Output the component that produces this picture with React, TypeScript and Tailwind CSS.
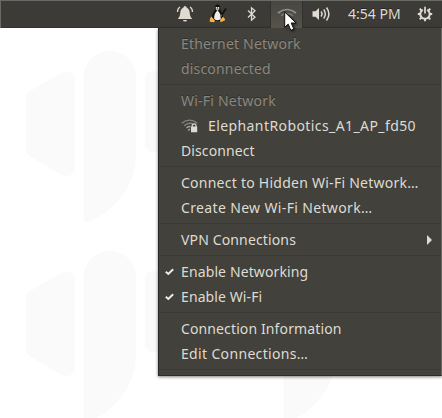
import type { ReactNode } from "react";

function Watermark() {
  return (
    <svg className="absolute inset-0" width="442" height="418" viewBox="0 0 442 418" aria-hidden="true">
      <defs>
        <g id="mark" fill="#fafafa">
          <path d="M26 98Q26 93 30 91L61 73Q67 69.500 71.500 73Q74.700 75.500 74.700 80V167.500Q74.700 172 71.500 174.500Q67 177.500 61 174.500L30 156.500Q26 154 26 149Z" />
          <path d="M83.500 75.500A26.300 26.300 0 0 1 136 75.500V154C136 184 116 210 89.500 221.500Q83.500 223.500 83.500 217Z" />
          <path d="M145 79A8 8 0 0 1 161 79V144A8 8 0 0 1 145 144Z" />
        </g>
      </defs>
      <use href="#mark" />
      <use href="#mark" y="200" />
      <use href="#mark" x="200" y="200" />
    </svg>
  );
}

function Bell() {
  return (
    <svg width="18" height="18" viewBox="0 0 18 18" fill="#dfdbd2">
      <circle cx="9" cy="2.600" r="1.500" />
      <path d="M9 2.500c3.100 0 4.500 2 4.700 5 .2 3 .8 4.500 2.500 6.500H1.800c1.700-2 2.300-3.500 2.500-6.500.2-3 1.600-5 4.700-5zM7 15h4a2 1.500 0 0 1-4 0z" />
      <path d="M4 2Q1.500 3.500 1.500 7M14 2Q16.500 3.500 16.500 7" fill="none" stroke="#dfdbd2" strokeWidth="1.300" />
    </svg>
  );
}

function Penguin() {
  return (
    <svg width="18" height="19" viewBox="0 0 18 19">
      <path d="M8.500.5C6.300.5 5.700 2 5.900 5 6 7 3 9 2.700 13.500L5 17h7l2-4c0-4-2.600-6-2.700-8C11.300 2 10.700.5 8.500.5z" fill="#111" />
      <path d="M8.500 6.500C6.500 8 4.800 11 5.200 15q3.300 2.500 6.600 0C12.200 11 10.500 8 8.500 6.500z" fill="#eeeeec" />
      <circle cx="7.500" cy="3.900" r=".9" fill="#fff" />
      <circle cx="9.500" cy="3.900" r=".9" fill="#fff" />
      <path d="M6.500 5h4L8.500 7.200z" fill="#f5a623" />
      <path d="M2.500 12.500l3.500 4.300-.8 1.500-4.500-.6.300-3.300zM14 12.700l-3 3.300.6 2.300 4.500-2-.3-1.500z" fill="#f3b53f" />
      <path d="M11.500 13.500l2.500-5" stroke="#b33a2b" strokeWidth="1" />
      <path d="M13 10.500L17 4.500" stroke="#111" strokeWidth="1.700" />
    </svg>
  );
}

function Bluetooth() {
  return (
    <svg width="10" height="16" viewBox="0 0 10 16" fill="none" stroke="#dfdbd2" strokeWidth="1.300">
      <path d="M1 4.500l7 6.700-3.500 3V1.800l3.500 3-7 6.700" />
    </svg>
  );
}

function WifiArcs() {
  return (
    <svg width="20" height="16" viewBox="0 0 20 16" fill="none" strokeWidth="1.600">
      <path d="M1 6Q10-1 19 6" stroke="#96938b" />
      <path d="M4 8.700Q10 4 16 8.700" stroke="#7d7a72" />
      <path d="M7 11.400Q10 9 13 11.400" stroke="#716f68" />
    </svg>
  );
}

function SecureWifi() {
  return (
    <svg width="17" height="14" viewBox="0 0 17 14" fill="none">
      <path d="M.7 4.200Q8.500-2 16.300 4.200" stroke="#86837c" strokeWidth="1.400" />
      <path d="M3.200 6.800Q8.200 2.600 12.500 5.500" stroke="#86837c" strokeWidth="1.400" />
      <path d="M5.500 9Q7.500 7 9.500 7.800M7 11.500l2-1.500" stroke="#aaa69e" strokeWidth="1.400" />
      <path d="M11.200 8V6.700a1.900 1.900 0 0 1 3.800 0V8" stroke="#dfdbd2" strokeWidth="1.200" />
      <rect x="10" y="7.500" width="6.200" height="5.700" rx=".5" fill="#dfdbd2" />
    </svg>
  );
}

function Speaker() {
  return (
    <svg width="19" height="16" viewBox="0 0 19 16" fill="none" stroke="#dfdbd2" strokeWidth="1.500">
      <path d="M.5 5.300h3L7 2v12L3.500 10.700h-3z" fill="#dfdbd2" stroke="none" />
      <path d="M9 5.500q2 2.500 0 5M11.700 3.500q3.300 4.500 0 9M14.500 1.500q4.800 6.500 0 13" />
    </svg>
  );
}

function PowerGear() {
  return (
    <svg width="16" height="16" viewBox="0 0 16 16" fill="none" stroke="#dfdbd2">
      <path d="M5.800 3.900a4.700 4.700 0 1 0 4.400 0" strokeWidth="2" />
      <path d="M8 .8v6.700" strokeWidth="1.700" />
      <path d="M2.700 2.700l2 2M13.300 2.700l-2 2M.8 8h2.500M12.700 8h2.500M2.700 13.300l2-2M13.300 13.300l-2-2M8 12.700v2.500" strokeWidth="1.900" />
    </svg>
  );
}

function Cursor() {
  return (
    <svg className="absolute left-[284px] top-[11px] z-10 drop-shadow-[1px_1px_1px_rgba(0,0,0,0.6)]" width="14" height="21" viewBox="0 0 14 21">
      <path d="M.7 1v15.300l3.500-3.200 2.600 6.200 3-1.300-2.600-6h4.900z" fill="#fff" stroke="#111" strokeWidth="1" />
    </svg>
  );
}

function TopBar() {
  return (
    <header className="flex h-7 border-l border-t border-[#6b6b66] bg-[#3c3b37] shadow-[inset_0_-1px_0_#34332f]">
      <div className="flex flex-1 items-start pl-[175px]">
        <div className="pt-1"><Bell /></div>
        <div className="ml-[15px] pt-[3px]"><Penguin /></div>
        <div className="ml-[20px] pt-[5px]"><Bluetooth /></div>
        <div className="ml-[13px] flex h-[27px] w-[33px] justify-center border-x border-[#32312d] bg-gradient-to-b from-[#484740] to-[#55534b] pt-[6px]">
          <WifiArcs />
        </div>
        <div className="ml-[9px] pt-[5px]"><Speaker /></div>
        <time className="ml-[17px] whitespace-nowrap pt-[3px] leading-5 text-[#dfdbd2] [text-shadow:0_-1px_0_#262522]">4:54 PM</time>
      </div>
      <div className="w-[25px] pt-[5px]"><PowerGear /></div>
    </header>
  );
}

type RowProps = { children: ReactNode; lead?: ReactNode; trail?: ReactNode; muted?: boolean; spacing?: string };

function Row({ children, lead, trail, muted, spacing = "" }: RowProps) {
  return (
    <li className={`flex h-[25px] items-center pr-[9px] ${muted ? "text-[#8b8880] [text-shadow:0_-1px_0_#302f2b]" : "text-[#dfdbd2]"}`}>
      <span className="flex w-[22px] shrink-0 pl-[6px]">{lead}</span>
      <span className={`flex items-center whitespace-nowrap ${spacing}`}>{children}</span>
      <span className="ml-auto">{trail}</span>
    </li>
  );
}

function Separator() {
  return (
    <li className="flex h-[7px] items-center" role="separator">
      <span className="h-px w-full bg-[#3a3934]" />
    </li>
  );
}

function Check() {
  return (
    <svg width="9" height="8" viewBox="0 0 9 8" fill="none">
      <path d="M.8 3.700L3.300 6 8.200 1.200" stroke="#eeeeec" strokeWidth="1.900" />
    </svg>
  );
}

function Arrow() {
  return (
    <svg width="5" height="10" viewBox="0 0 5 10">
      <path d="M0 0l5 5-5 5z" fill="#dfdbd2" />
    </svg>
  );
}

export default function App() {
  return (
    <main className="relative h-[418px] w-[442px] overflow-hidden bg-white font-['Noto_Sans',sans-serif] text-[14px]">
      <Watermark />
      <div className="relative">
        <TopBar />
        <ul className="ml-[158px] h-[348px] w-[284px] border-b border-l border-r border-b-[#2d2c29] border-l-[#282824] border-r-[#686762] bg-[#42413b] pt-[3px] shadow-[0_1px_3px_rgba(0,0,0,0.5)]">
          <Row muted spacing="tracking-[0.19px]">Ethernet Network</Row>
          <Row muted spacing="tracking-[0.18px]">disconnected</Row>
          <Separator />
          <Row muted spacing="tracking-[0.22px]">Wi-Fi Network</Row>
          <Row spacing="tracking-[0.41px]">
            <span className="w-[27px]"><SecureWifi /></span>
            <span>ElephantRobotics_A1_AP_fd50</span>
          </Row>
          <Row spacing="tracking-[0.1px]">Disconnect</Row>
          <Separator />
          <Row spacing="tracking-[0.25px]">Connect to Hidden Wi-Fi Network…</Row>
          <Row spacing="tracking-[0.35px]">Create New Wi-Fi Network…</Row>
          <Separator />
          <Row trail={<Arrow />} spacing="tracking-[0.14px]">VPN Connections</Row>
          <Separator />
          <Row lead={<Check />} spacing="tracking-[0.12px]">Enable Networking</Row>
          <Row lead={<Check />} spacing="tracking-[0.1px]">Enable Wi-Fi</Row>
          <Separator />
          <Row spacing="tracking-[0.12px]">Connection Information</Row>
          <Row spacing="tracking-[0.34px]">Edit Connections…</Row>
          <Separator />
        </ul>
      </div>
      <Cursor />
    </main>
  );
}
